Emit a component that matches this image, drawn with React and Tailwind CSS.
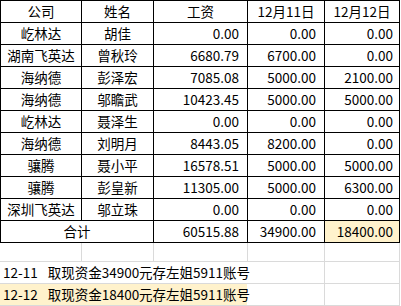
import React from 'react';

const rows = [
  ['屹林达', '胡佳', '0.00', '0.00', '0.00'],
  ['湖南飞英达', '曾秋玲', '6680.79', '6700.00', '0.00'],
  ['海纳德', '彭泽宏', '7085.08', '5000.00', '2100.00'],
  ['海纳德', '邬瞻武', '10423.45', '5000.00', '5000.00'],
  ['屹林达', '聂泽生', '0.00', '0.00', '0.00'],
  ['海纳德', '刘明月', '8443.05', '8200.00', '0.00'],
  ['骧腾', '聂小平', '16578.51', '5000.00', '5000.00'],
  ['骧腾', '彭皇新', '11305.00', '5000.00', '6300.00'],
  ['深圳飞英达', '邬立珠', '0.00', '0.00', '0.00'],
];

const headers = ['公司', '姓名', '工资', '12月11日', '12月12日'];

const cell = 'h-[22px] flex items-center border-r border-b border-black';

const App = () => {
  return (
    <div
      className="w-[401px] h-[306px] bg-white text-black text-[13.5px] leading-none overflow-hidden"
      style={{ fontFamily: '"Noto Sans CJK SC", "Noto Sans", sans-serif' }}
    >
      {/* main table */}
      <div className="grid grid-cols-[81px_72px_94px_77px_75px] border-l border-t border-black w-[400px]">
        {headers.map((h) => (
          <div key={h} className={`${cell} justify-center pt-px`}>{h}</div>
        ))}
        {rows.map((r, i) => (
          <React.Fragment key={i}>
            <div className={`${cell} justify-center pt-px`}>{r[0]}</div>
            <div className={`${cell} justify-center pt-px`}>{r[1]}</div>
            <div className={`${cell} justify-end pr-2 pt-px`}>{r[2]}</div>
            <div className={`${cell} justify-end pr-2 pt-px`}>{r[3]}</div>
            <div className={`${cell} justify-end pr-[6px] pt-px`}>{r[4]}</div>
          </React.Fragment>
        ))}
        <div className={`${cell} col-span-2 justify-center pt-px`}>合计</div>
        <div className={`${cell} justify-end pr-2 pt-px`}>60515.88</div>
        <div className={`${cell} justify-end pr-2 pt-px`}>34900.00</div>
        <div className={`${cell} justify-end pr-[6px] pt-px bg-[#fff2cc]`}>18400.00</div>
      </div>

      {/* sheet area below */}
      <div className="grid grid-cols-[82px_72px_94px_77px_75px] w-[400px]">
        <div className="h-[19px] border-r border-b border-[#dadada]" />
        <div className="h-[19px] border-r border-b border-[#dadada]" />
        <div className="h-[19px] border-r border-b border-[#dadada]" />
        <div className="h-[19px] border-r border-b border-[#dadada]" />
        <div className="h-[19px] border-r border-b border-[#dadada]" />

        <div className="col-span-4 h-[22px] flex items-center pl-[3px] pt-px border-r border-b border-[#dadada] whitespace-nowrap">
          <span>12-11</span>
          <span className="ml-[10px]">取现资金34900元存左姐5911账号</span>
        </div>
        <div className="h-[22px] border-r border-b border-[#dadada]" />

        <div className="col-span-4 h-[22px] flex items-center pl-[3px] pt-px border-r border-b border-[#dadada] whitespace-nowrap bg-[linear-gradient(to_right,#fff2cc_247px,transparent_247px)]">
          <span>12-12</span>
          <span className="ml-[10px]">取现资金18400元存左姐5911账号</span>
        </div>
        <div className="h-[22px] border-r border-b border-[#dadada]" />
      </div>
    </div>
  );
};

export default App;
